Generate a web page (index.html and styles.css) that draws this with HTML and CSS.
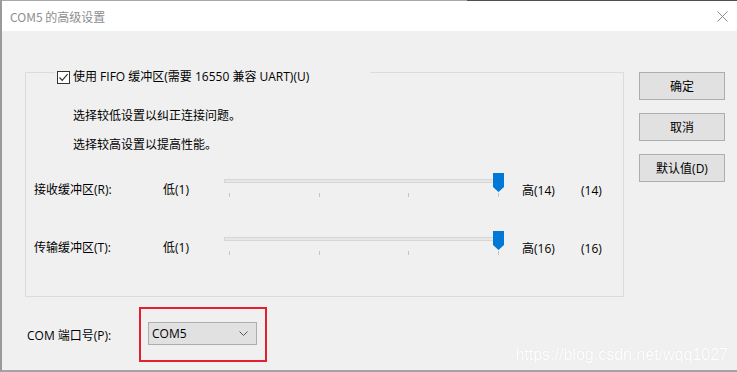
FILE: index.html
```html
<!DOCTYPE html>
<html>
<head>
<meta name="viewport" content="width=device-width, initial-scale=1">
<link rel="stylesheet" href="styles.css">
</head>
<body>

<div class="window">
  <div class="frame-top"></div>
  <div class="titlebar">
    <span class="title">COM5 的高级设置</span>
    <svg class="close" width="11" height="11" viewBox="0 0 11 11">
      <path d="M0.5 0.5 L10.5 10.5 M10.5 0.5 L0.5 10.5" stroke="#8a8a8a" stroke-width="1" fill="none"/>
    </svg>
  </div>

  <div class="dlg-body">
    <div class="main">
      <fieldset class="group">
        <legend class="fifo">
          <span class="check">
            <svg width="11" height="11" viewBox="0 0 11 11"><path d="M1.5 5.5 L4.2 8.3 L9.6 2.2" stroke="#333" stroke-width="1.2" fill="none"/></svg>
          </span>使用 FIFO 缓冲区(需要 16550 兼容 UART)(U)
        </legend>

        <p class="hint hint-low">选择较低设置以纠正连接问题。</p>
        <p class="hint hint-high">选择较高设置以提高性能。</p>

        <div class="buf-row">
          <span class="buf-name">接收缓冲区(R):</span>
          <span class="buf-low">低(1)</span>
          <div class="slider">
            <div class="track"></div>
            <div class="ticks"><i></i><i></i><i></i><i></i></div>
            <svg class="thumb" width="11" height="19" viewBox="0 0 11 19"><path d="M0 0 H11 V14 L5.5 19 L0 14 Z" fill="#0078d7"/></svg>
          </div>
          <span class="buf-high">高(14)</span>
          <span class="buf-val">(14)</span>
        </div>

        <div class="buf-row buf-row-tx">
          <span class="buf-name">传输缓冲区(T):</span>
          <span class="buf-low">低(1)</span>
          <div class="slider">
            <div class="track"></div>
            <div class="ticks"><i></i><i></i><i></i><i></i></div>
            <svg class="thumb" width="11" height="19" viewBox="0 0 11 19"><path d="M0 0 H11 V14 L5.5 19 L0 14 Z" fill="#0078d7"/></svg>
          </div>
          <span class="buf-high">高(16)</span>
          <span class="buf-val">(16)</span>
        </div>
      </fieldset>

      <div class="port-row">
        <span class="port-label">COM 端口号(P):</span>
        <div class="mark">
          <div class="combo">
            <span>COM5</span>
            <svg width="9" height="5" viewBox="0 0 9 5"><path d="M0.5 0.5 L4.5 4.5 L8.5 0.5" stroke="#555" stroke-width="1" fill="none"/></svg>
          </div>
        </div>
      </div>
    </div>

    <div class="buttons">
      <button class="btn">确定</button>
      <button class="btn">取消</button>
      <button class="btn">默认值(D)</button>
    </div>

    <div class="watermark">https://blog.csdn.net/wqq1027</div>
  </div>
</div>

</body>
</html>
```

FILE: styles.css
```css
body {
  margin: 0;
  font-family: "Open Sans", "Noto Sans CJK SC", sans-serif;
  font-size: 12px;
  color: #000;
}

.window {
  width: 737px;
  height: 372px;
  box-sizing: border-box;
  border-left: 2px solid #9a9a9a;
  border-bottom: 2px solid #a3a3a3;
  display: flex;
  flex-direction: column;
  background-color: #f0f0f0;
}

.frame-top {
  height: 1px;
  background: linear-gradient(to right, #a9a9a9 465px, #505050 465px);
}

.titlebar {
  height: 30px;
  background-color: #fff;
  display: flex;
  align-items: center;
  justify-content: space-between;
  padding-left: 8px;
}

.title {
  color: #8e8e8e;
  font-family: "Noto Sans CJK SC", sans-serif;
}

.close {
  margin-right: 9px;
}

.dlg-body {
  flex: 1;
  display: flex;
  position: relative;
}

.main {
  padding-left: 23px;
  padding-top: 29px;
}

.group {
  width: 599px;
  box-sizing: border-box;
  margin: 0;
  border: 1px solid #dcdcdc;
  padding: 0 8px 39px 8px;
}

.fifo {
  width: 315px;
  box-sizing: border-box;
  margin-left: 21px;
  padding: 9px 2px 0 2px;
  line-height: 16px;
  display: flex;
  align-items: center;
}

.check {
  width: 13px;
  height: 13px;
  box-sizing: border-box;
  border: 1px solid #333;
  background-color: #fff;
  margin-right: 3px;
  display: flex;
  align-items: center;
  justify-content: center;
}

.hint {
  margin: 0 0 0 39px;
  line-height: 16px;
}

.hint-low { margin-top: 23px; }
.hint-high { margin-top: 13px; }

.buf-row {
  display: flex;
  align-items: flex-start;
  height: 26px;
  margin-top: 20px;
  line-height: 16px;
}

.buf-row-tx { margin-top: 32px; }

.buf-name {
  width: 129px;
  padding-top: 9px;
}

.buf-low {
  width: 61px;
  padding-top: 9px;
}

.slider {
  width: 280px;
  height: 26px;
  position: relative;
}

.track {
  margin-top: 6px;
  height: 4px;
  box-sizing: border-box;
  border: 1px solid #d6d6d6;
  background-color: #e7e7e7;
}

.ticks {
  margin-top: 10px;
  height: 4px;
  padding: 0 5px;
  display: flex;
  justify-content: space-between;
}

.ticks i {
  width: 1px;
  height: 4px;
  background-color: #c4c4c4;
}

.thumb {
  position: absolute;
  left: 269px;
  top: 0;
}

.buf-high {
  margin-left: 18px;
  width: 59px;
  padding-top: 10px;
}

.buf-val {
  padding-top: 10px;
}

.port-row {
  display: flex;
  align-items: center;
  margin-top: 10px;
}

.port-label {
  width: 112px;
  margin-left: 2px;
}

.mark {
  border: 2px solid #e5202e;
  padding: 13px 8px 15px 7px;
}

.combo {
  width: 109px;
  height: 23px;
  box-sizing: border-box;
  border: 1px solid #adadad;
  background-color: #e1e1e1;
  padding: 0 8px 0 3px;
  display: flex;
  align-items: center;
  justify-content: space-between;
}

.buttons {
  margin-left: 15px;
  padding-top: 41px;
  display: flex;
  flex-direction: column;
  gap: 13px;
}

.btn {
  width: 86px;
  height: 28px;
  border: 1px solid #adadad;
  background-color: #e1e1e1;
  font-family: "Open Sans", "Noto Sans CJK SC", sans-serif;
  font-size: 12px;
  color: #000;
  padding: 0;
}

.watermark {
  position: absolute;
  right: 9px;
  bottom: 6px;
  font-family: "Liberation Sans", sans-serif;
  font-size: 16px;
  color: #fff;
  text-shadow: 0 0 1px rgba(0, 0, 0, 0.1);
}
```
